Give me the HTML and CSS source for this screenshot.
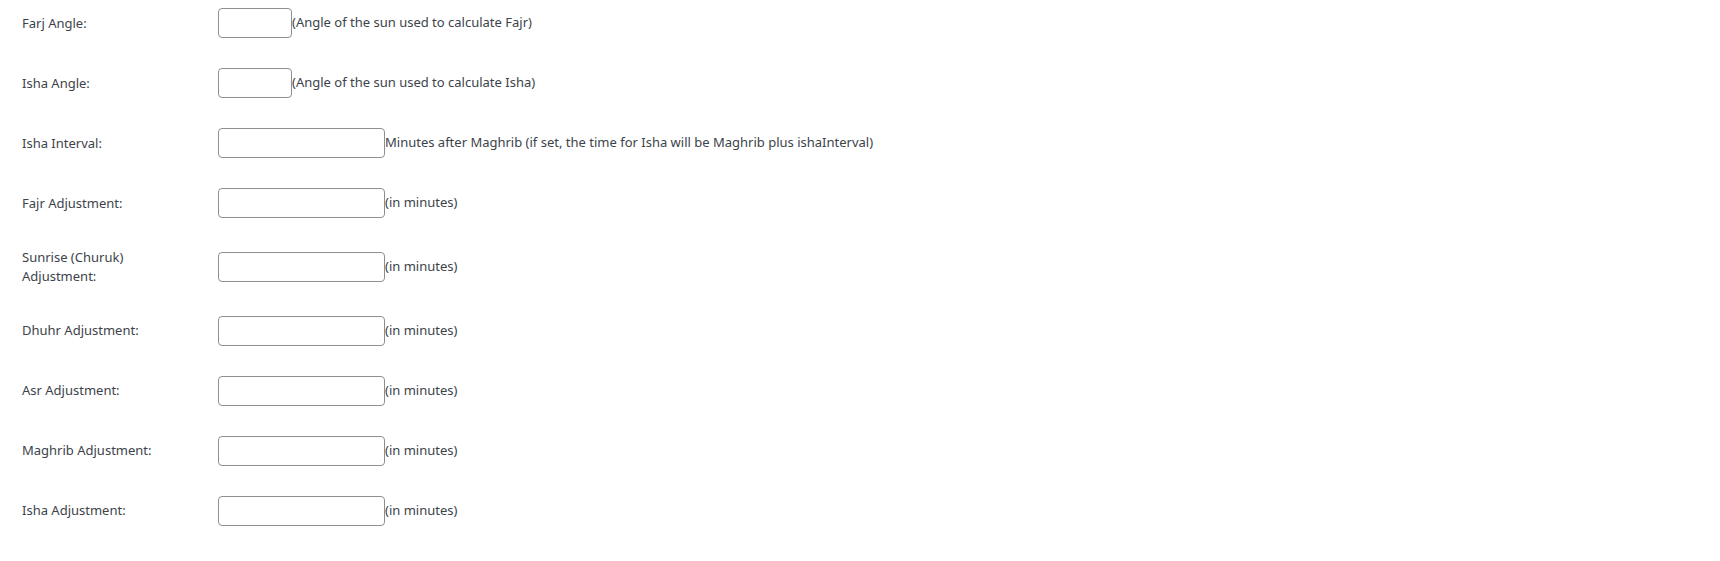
FILE: index.html
```html
<!DOCTYPE html>
<html lang="en">
<head>
<meta charset="utf-8">
<title>Prayer time settings</title>
<link rel="stylesheet" href="styles.css">
</head>
<body>
<div class="settings">
  <div class="row">
    <label class="label">Farj Angle:</label>
    <div class="field"><input class="input small" type="text"><span class="desc">(Angle of the sun used to calculate Fajr)</span></div>
  </div>
  <div class="row">
    <label class="label">Isha Angle:</label>
    <div class="field"><input class="input small" type="text"><span class="desc">(Angle of the sun used to calculate Isha)</span></div>
  </div>
  <div class="row">
    <label class="label">Isha Interval:</label>
    <div class="field"><input class="input" type="text"><span class="desc">Minutes after Maghrib (if set, the time for Isha will be Maghrib plus ishaInterval)</span></div>
  </div>
  <div class="row">
    <label class="label">Fajr Adjustment:</label>
    <div class="field"><input class="input" type="text"><span class="desc">(in minutes)</span></div>
  </div>
  <div class="row">
    <label class="label">Sunrise (Churuk) Adjustment:</label>
    <div class="field"><input class="input" type="text"><span class="desc">(in minutes)</span></div>
  </div>
  <div class="row">
    <label class="label">Dhuhr Adjustment:</label>
    <div class="field"><input class="input" type="text"><span class="desc">(in minutes)</span></div>
  </div>
  <div class="row">
    <label class="label">Asr Adjustment:</label>
    <div class="field"><input class="input" type="text"><span class="desc">(in minutes)</span></div>
  </div>
  <div class="row">
    <label class="label">Maghrib Adjustment:</label>
    <div class="field"><input class="input" type="text"><span class="desc">(in minutes)</span></div>
  </div>
  <div class="row">
    <label class="label">Isha Adjustment:</label>
    <div class="field"><input class="input" type="text"><span class="desc">(in minutes)</span></div>
  </div>
</div>
</body>
</html>
```
FILE: styles.css
```css
html, body {
  margin: 0;
  background: #fff;
}
body {
  font-family: "Noto Sans", "Open Sans", sans-serif;
  font-size: 13px;
  color: #3c434a;
}
.settings {
  margin-top: -7px;
  padding-left: 22px;
}
.row {
  display: grid;
  grid-template-columns: 196px 1fr;
  align-items: center;
}
.label {
  max-width: 160px;
  padding: 15px 0;
  line-height: 1.45;
}
.field {
  display: flex;
  align-items: center;
  padding: 15px 0;
}
.input {
  box-sizing: border-box;
  width: 167px;
  height: 30px;
  margin: 0;
  padding: 0 8px;
  border: 1px solid #8c8f94;
  border-radius: 4px;
  background: #fff;
  font: inherit;
  color: #2c3338;
}
.small {
  width: 74px;
}
.desc {
  line-height: 1.5;
}
```
